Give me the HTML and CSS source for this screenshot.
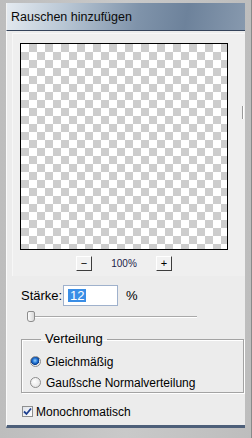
FILE: index.html
```html
<!DOCTYPE html>
<html lang="de">

<head>
  <meta charset="UTF-8" />
  <title>Rauschen hinzufügen</title>
  <link rel="stylesheet" href="styles.css">
</head>

<body>
  <div class="frame">
    <div class="titlebar">Rauschen hinzufügen</div>

    <div class="panel">
      <div class="preview-area">
        <div class="preview"></div>
        <div class="grip"></div>
        <div class="zoom-row">
          <span class="btn">&minus;</span>
          <span class="zoom-label">100%</span>
          <span class="btn">+</span>
        </div>
      </div>

      <div class="amount-row">
        <label class="amount-label">Stärke:</label>
        <div class="amount-input"><span class="selected">12</span></div>
        <span class="unit">%</span>
      </div>

      <div class="slider">
        <div class="track"></div>
        <div class="thumb"></div>
      </div>

      <fieldset class="group">
        <legend>Verteilung</legend>
        <div class="option">
          <span class="radio checked"></span>
          <span>Gleichmäßig</span>
        </div>
        <div class="option">
          <span class="radio"></span>
          <span>Gaußsche Normalverteilung</span>
        </div>
      </fieldset>

      <div class="option check-row">
        <span class="checkbox">
          <svg width="9" height="9" viewBox="0 0 9 9">
            <path d="M1 4.5 L3.5 7 L8 1.5" fill="none" stroke="#1d3f8f" stroke-width="1.8" />
          </svg>
        </span>
        <span>Monochromatisch</span>
      </div>
    </div>
  </div>
</body>

</html>
```

FILE: styles.css
```css
* {
  padding: 0;
  margin: 0;
  box-sizing: border-box;
}

body {
  width: 252px;
  height: 438px;
  overflow: hidden;
  font-family: "Liberation Sans", Arial, sans-serif;
  font-size: 12px;
  color: #000;
  background-color: #c3c3c3;
}

.frame {
  display: flex;
  flex-direction: column;
  height: 438px;
  padding: 3px 6px 10px 6px;
  background: linear-gradient(to right, #bdbdbd, #c9c9c9 50%, #bdbdbd);
  border-right: 1px solid #8a8a8a;
}

.titlebar {
  height: 28px;
  padding-left: 4px;
  line-height: 29px;
  font-size: 12.5px;
  background: linear-gradient(100deg, #e4eaf0 0%, #b8c6d4 25%, #7f93aa 55%, #6d829b 75%, #8799ae 100%);
  border-left: 1px solid #f2f2f2;
  border-bottom: 1px solid #34435a;
  color: #0a0a0a;
}

.panel {
  flex: 1;
  display: flex;
  flex-direction: column;
  background-color: #ececec;
  border-left: 1px solid #fafafa;
  border-bottom: 3px solid #4d5f79;
}

.preview-area {
  position: relative;
  margin: 2px 0 0 5px;
  padding: 9px 0 0 7px;
  border-top: 1px solid #f7f7f7;
  border-left: 1px solid #f7f7f7;
  background-color: #efefef;
}

.preview {
  width: 208px;
  height: 207px;
  border: 1px solid #000;
  background-color: #fff;
  background-image:
    linear-gradient(45deg, #cdcdcd 25%, transparent 25%, transparent 75%, #cdcdcd 75%),
    linear-gradient(45deg, #cdcdcd 25%, transparent 25%, transparent 75%, #cdcdcd 75%);
  background-size: 16px 16px;
  background-position: 0 0, 8px 8px;
}

.grip {
  position: absolute;
  right: 1px;
  top: 72px;
  width: 2px;
  height: 13px;
  background-color: #9a9a9a;
  border-right: 1px solid #fff;
}

.zoom-row {
  display: flex;
  justify-content: center;
  align-items: center;
  width: 208px;
  height: 26px;
  padding-top: 1px;
}

.btn {
  width: 16px;
  height: 15px;
  font-size: 11px;
  line-height: 13px;
  text-align: center;
  background-color: #f2f2f2;
  border: 1px solid;
  border-color: #fff #3c3c3c #3c3c3c #fff;
}

.zoom-label {
  width: 64px;
  font-size: 10px;
  text-align: center;
  color: #1c1c4a;
}

.amount-row {
  display: flex;
  align-items: center;
  height: 21px;
  margin: 9px 0 0 14px;
}

.amount-label {
  width: 42px;
  font-size: 13px;
}

.amount-input {
  width: 55px;
  height: 21px;
  padding: 3px 0 0 4px;
  background-color: #fff;
  border: 1px solid #9fb1cc;
}

.selected {
  display: inline-block;
  padding: 0 2px;
  height: 13px;
  line-height: 13px;
  font-size: 13px;
  color: #fff;
  background-color: #3a8ee6;
}

.unit {
  margin-left: 8px;
  font-size: 13px;
}

.slider {
  position: relative;
  height: 12px;
  margin: 5px 0 0 23px;
  width: 167px;
}

.track {
  position: absolute;
  left: 0;
  right: 0;
  top: 5px;
  height: 2px;
  border-top: 1px solid #a9a9a9;
  border-bottom: 1px solid #fff;
}

.thumb {
  position: absolute;
  left: -3px;
  top: 0;
  width: 8px;
  height: 11px;
  border: 1px solid #8d8d8d;
  border-radius: 2px 2px 3px 3px;
  background: linear-gradient(to right, #fdfdfd, #d8d8d8);
}

.group {
  width: 223px;
  height: 60px;
  margin: 10px 0 0 14px;
  padding: 6px 0 0 8px;
  border: 1px solid #a3a3a3;
  box-shadow: inset 1px 1px 0 #fff, 1px 1px 0 #fff;
}

.group legend {
  margin-left: 11px;
  padding: 0 4px;
  font-size: 13px;
  line-height: 12px;
}

.option {
  display: flex;
  align-items: center;
  gap: 5px;
  height: 21px;
  font-size: 12px;
}

.radio {
  width: 11px;
  height: 11px;
  border-radius: 50%;
  border: 1px solid #8d8d8d;
  background: radial-gradient(circle at 40% 40%, #fff, #dcdcdc);
}

.radio.checked {
  background: radial-gradient(circle at 45% 40%, #8fd0ff 0, #1f6fd0 35%, #0b3f8c 55%, #e8e8e8 62%, #fff 100%);
}

.check-row {
  margin: 8px 0 0 15px;
  gap: 3px;
}

.checkbox {
  display: flex;
  align-items: center;
  justify-content: center;
  width: 11px;
  height: 11px;
  border: 1px solid #8e8f8f;
  background: linear-gradient(135deg, #dfe3ea, #fff);
}
```
